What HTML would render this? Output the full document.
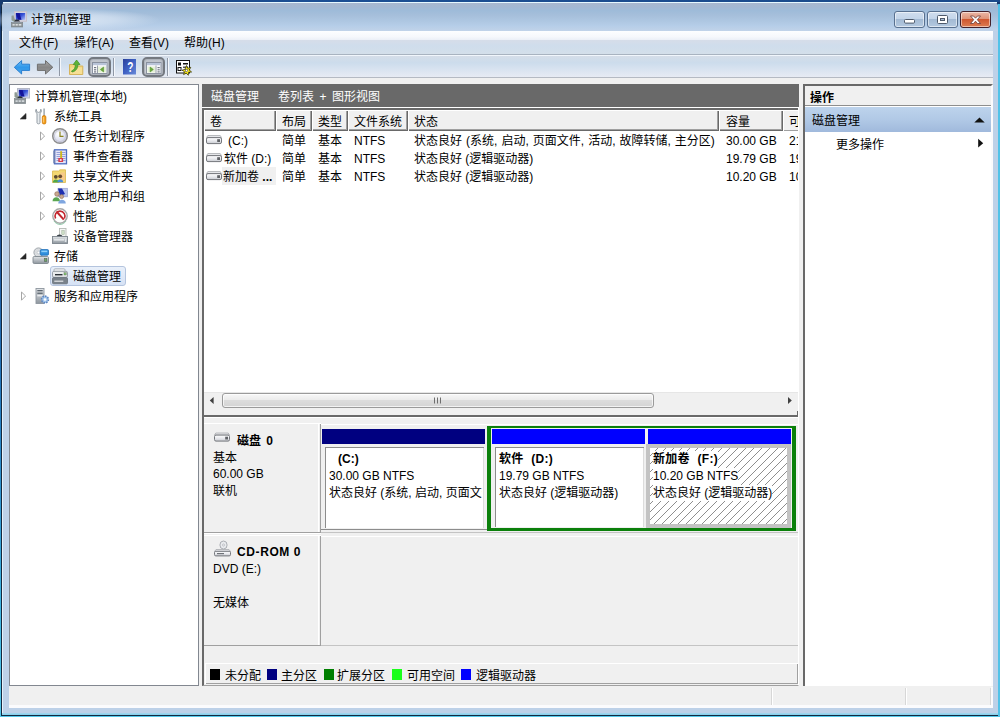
<!DOCTYPE html>
<html lang="zh-CN">
<head>
<meta charset="utf-8">
<title>计算机管理</title>
<style>
html,body{margin:0;padding:0;}
body{width:1000px;height:717px;overflow:hidden;position:relative;background:linear-gradient(to bottom,#173a6e 0%,#1b4f98 30%,#2783c6 60%,#3fb6e2 85%,#55c8ea 100%);
 font-family:"Liberation Sans","Noto Sans CJK SC",sans-serif;font-size:12px;color:#000;line-height:14px;}
.a{position:absolute;}
.t{position:absolute;white-space:nowrap;height:14px;line-height:14px;}
.b{font-weight:bold;}
svg{position:absolute;overflow:visible;}
#frame{left:1px;top:2px;width:997px;height:714px;box-sizing:border-box;background:#bdd1e8;border-left:1px solid #15293f;border-bottom:1px solid #15293f;border-radius:5px 5px 0 0;box-shadow:inset 1px 1px 0 #e6f2fc;}
#titlegrad{left:2px;top:3px;width:996px;height:28px;border-radius:4px 4px 0 0;background:linear-gradient(to bottom,#a9b7cf 0%,#a3b8d3 15%,#9ebbd9 27%,#a6bfdb 45%,#aec7e2 65%,#b5cde8 80%,#c1d3e9 100%);}
#menubar{left:9px;top:31px;width:984px;height:23px;background:linear-gradient(#fdfeff 0%,#f6f8fc 25%,#ecf0f8 38%,#d6dde9 40%,#cfddec 65%,#d4dfea 100%);}
#toolbar{left:9px;top:55px;width:984px;height:22px;background:linear-gradient(#f1f6fc 0,#f1f6fc 1px,#d5dde8 1px,#ccdcec 35%,#e7ebf4 100%);}
#client{left:9px;top:78px;width:984px;height:630px;background:#f0f0f0;}
.hd{position:absolute;top:110px;height:21px;background:#f0f0f0;box-shadow:inset 1px 1px 0 #fff,inset -1px -1px 0 #696969,inset -2px -2px 0 #a0a0a0;}
.raised{position:absolute;background:#f0f0f0;box-shadow:inset 1px 1px 0 #fff,inset -1px -1px 0 #a0a0a0;}
.sunk{position:absolute;background:#fff;box-shadow:inset 1px 1px 0 #a0a0a0,inset -1px -1px 0 #e3e3e3;}
.pbtn{position:absolute;top:57px;width:23px;height:20px;border:2px solid #747980;border-radius:5px;box-sizing:border-box;background:linear-gradient(#bcc1c9,#cdd1d8);box-shadow:inset 0 0 0 1px #aeb3bb;}
.tsep{position:absolute;top:58px;width:1px;height:18px;background:#8f97a5;box-shadow:1px 0 0 #f4f7fb;}
#tglow{left:-20px;top:3px;width:180px;height:28px;background:radial-gradient(ellipse closest-side at 50% 60%,rgba(222,233,245,.9) 0%,rgba(215,228,243,.7) 50%,rgba(200,218,238,0) 100%);}
</style>
</head>
<body>
<div id="frame" class="a"></div>
<div id="titlegrad" class="a"></div>
<div id="tglow" class="a"></div>
<div class="a" style="left:3px;top:2px;width:994px;height:1px;background:#e6f8ff;"></div>
<div class="a" style="left:0;top:0;width:1000px;height:2px;background:linear-gradient(to right,#173a6e,#1d4f94 30%,#1b4a8a 100%);"></div>
<div class="a" style="left:998px;top:4px;width:2px;height:713px;background:#52c2e8;"></div>
<div class="a" style="left:2px;top:713px;width:996px;height:2px;background:linear-gradient(#a9d6ee,#7fd0ec);"></div>
<div class="t" style="left:31px;top:13px;">计算机管理</div>
<div id="menubar" class="a"></div>
<div class="a" style="left:9px;top:54px;width:984px;height:1px;background:#a9b3c0;"></div>
<div id="toolbar" class="a"></div>
<div class="a" style="left:9px;top:77px;width:984px;height:1px;background:#b5bac3;"></div>
<div id="client" class="a"></div>
<div class="t" style="left:19px;top:36px;">文件(F)</div>
<div class="t" style="left:74px;top:36px;">操作(A)</div>
<div class="t" style="left:129px;top:36px;">查看(V)</div>
<div class="t" style="left:184px;top:36px;">帮助(H)</div>
<svg class="a" style="left:9px;top:9px;" width="22" height="20" viewBox="9 9 22 20">
 <defs><linearGradient id="scr0" x1="0" y1="0" x2="1" y2="1"><stop offset="0" stop-color="#0a1aa0"/><stop offset="0.5" stop-color="#3a55d8"/><stop offset="1" stop-color="#b8c4f6"/></linearGradient></defs>
 <g transform="translate(-3 -76.8)">
 <rect x="17.5" y="88.5" width="12" height="9.5" fill="#d5d9e6" stroke="#c9bfc8" stroke-width="1"/>
 <rect x="18.8" y="89.8" width="9.4" height="6.9" fill="url(#scr0)"/>
 <polygon points="19,90 22.5,90 24.5,96.5 21,96.5" fill="#14149a"/>
 <path d="M14.5 92.5 L16.5 92 L17.5 95.5 L21 97.8 L17 98.6 L14.5 97 Z" fill="#8e9a94"/>
 <path d="M17.2 98.2 C18.5 95.6 21.5 95.6 23 98.2 Z" fill="#2a2f3a"/>
 <rect x="14.3" y="99.4" width="11.4" height="4.4" fill="#8b9296" stroke="#7a8286" stroke-width="0.6"/>
 <rect x="15.5" y="100.8" width="2.2" height="1.6" fill="#d9dee0"/><rect x="18.6" y="100.8" width="2.2" height="1.6" fill="#d9dee0"/><rect x="21.7" y="100.8" width="2.6" height="1.6" fill="#d9dee0"/>
 </g>
</svg>
<!-- caption buttons -->
<div class="a" style="left:894px;top:11px;width:31px;height:17px;box-sizing:border-box;border:1px solid #58708f;border-radius:3px;background:linear-gradient(#d0deee 0%,#c3d5e9 45%,#a3bad4 50%,#b4c9e0 100%);box-shadow:inset 0 0 0 1px rgba(255,255,255,.55);"></div>
<div class="a" style="left:927px;top:11px;width:31px;height:17px;box-sizing:border-box;border:1px solid #58708f;border-radius:3px;background:linear-gradient(#d0deee 0%,#c3d5e9 45%,#a3bad4 50%,#b4c9e0 100%);box-shadow:inset 0 0 0 1px rgba(255,255,255,.55);"></div>
<div class="a" style="left:960px;top:11px;width:31px;height:17px;box-sizing:border-box;border:1px solid #43202a;border-radius:3px;background:linear-gradient(#eab7a6 0%,#df9479 45%,#cf5730 50%,#dd7d52 100%);box-shadow:inset 0 0 0 1px rgba(255,255,255,.5);"></div>
<svg class="a" style="left:894px;top:11px;" width="97" height="17" viewBox="0 0 97 17">
 <rect x="10.5" y="8.5" width="10" height="3.6" rx="1" fill="#fff" stroke="#4e5a6b" stroke-width="1"/>
 <rect x="43.5" y="4.5" width="10" height="8" rx="1" fill="#fff" stroke="#4e5a6b" stroke-width="1"/>
 <rect x="46.5" y="7.5" width="4" height="2" fill="#a9bdd6" stroke="#4e5a6b" stroke-width="1"/>
 <path d="M76.5 5 L79.5 5 L81.5 7.2 L83.5 5 L86.5 5 L83.3 8.7 L86.5 12.5 L83.5 12.5 L81.5 10.2 L79.5 12.5 L76.5 12.5 L79.7 8.7 Z" fill="#fff" stroke="#6a3a36" stroke-width="0.8"/>
</svg>
<!-- toolbar -->
<svg class="a" style="left:9px;top:55px;" width="200" height="23" viewBox="9 55 200 23">
 <defs>
  <linearGradient id="gb" x1="0" y1="0" x2="0" y2="1"><stop offset="0" stop-color="#6fc0f7"/><stop offset="0.5" stop-color="#2f97ea"/><stop offset="1" stop-color="#4aa8ee"/></linearGradient>
  <linearGradient id="gg" x1="0" y1="0" x2="0" y2="1"><stop offset="0" stop-color="#a9a9a9"/><stop offset="0.5" stop-color="#868686"/><stop offset="1" stop-color="#9a9a9a"/></linearGradient>
  <linearGradient id="gh" x1="0" y1="0" x2="1" y2="1"><stop offset="0" stop-color="#2a3f9a"/><stop offset="0.5" stop-color="#3f62c4"/><stop offset="1" stop-color="#6a8ad8"/></linearGradient>
 </defs>
 <!-- back -->
 <path d="M14.3 67.3 L21.6 60.6 L21.6 64.2 L29.6 64.2 L29.6 70.4 L21.6 70.4 L21.6 74 Z" fill="url(#gb)" stroke="#2a7fd0" stroke-width="1" stroke-linejoin="round"/>
 <!-- forward -->
 <path d="M52.8 67.3 L45.5 60.6 L45.5 64.2 L37.4 64.2 L37.4 70.4 L45.5 70.4 L45.5 74 Z" fill="url(#gg)" stroke="#6f6f6f" stroke-width="1" stroke-linejoin="round"/>
 <!-- folder up -->
 <path d="M69.5 64.5 L74 64.5 L75.5 66 L82.8 66 L82.8 74.5 L69.5 74.5 Z" fill="#f2d57c" stroke="#d6b45c" stroke-width="1"/>
 <rect x="70.5" y="67.5" width="11.5" height="6.5" fill="#f6df95"/>
 <path d="M71.5 71 C74.5 70 75.5 67 75.3 64.5 L73.2 64.5 L76.6 60 L80 64.5 L77.9 64.5 C78 68.5 75.5 71.5 72 72 Z" fill="#5fb336" stroke="#3f8f22" stroke-width="0.7"/>
 <!-- help -->
 <rect x="123" y="59" width="13" height="15.5" fill="url(#gh)"/>
 <text transform="translate(130.4 72.3) scale(0.72 1.08)" font-family="Liberation Sans, sans-serif" font-weight="bold" font-size="14" fill="#fff" text-anchor="middle">?</text>
 <!-- properties-like icon -->
 <rect x="176.5" y="60.5" width="13" height="12.5" fill="#fff" stroke="#111" stroke-width="1"/>
 <rect x="178" y="62.5" width="3" height="3" fill="#111"/><rect x="183" y="63" width="5" height="1.5" fill="#111"/>
 <rect x="178" y="67.5" width="3" height="3" fill="none" stroke="#111" stroke-width="1"/><rect x="183" y="66.5" width="5" height="1.5" fill="#555"/>
 <path d="M186.5 65.5 L187.7 68.3 L190.8 67.3 L189.3 70 L191.6 72 L188.6 72.3 L188.3 75.3 L186.2 73.2 L183.6 74.6 L184.5 71.7 L182 70.2 L185 69.3 Z" fill="#f4e11a" stroke="#2a2a00" stroke-width="0.7"/>
 <rect x="185.3" y="69.3" width="2.4" height="2.4" fill="#fff" stroke="#333" stroke-width="0.5"/>
</svg>
<div class="tsep" style="left:59px;"></div>
<div class="tsep" style="left:113px;"></div>
<div class="tsep" style="left:167px;"></div>
<div class="pbtn" style="left:88px;"></div>
<div class="pbtn" style="left:142px;"></div>
<svg class="a" style="left:88px;top:57px;" width="80" height="20" viewBox="88 57 80 20">
 <!-- show/hide console tree -->
 <rect x="92.5" y="62.5" width="14.5" height="11" fill="#fafbfd" stroke="#8a92a0" stroke-width="1"/>
 <rect x="93" y="63" width="13.5" height="2.2" fill="#b9c4d8"/>
 <rect x="98" y="66.5" width="8" height="6" fill="#e5f0d8"/>
 <line x1="97.5" y1="65.5" x2="97.5" y2="73" stroke="#9aa0aa" stroke-width="1"/>
 <rect x="94" y="67" width="2.2" height="1.2" fill="#6f7681"/><rect x="94" y="69.2" width="2.2" height="1.2" fill="#6f7681"/><rect x="94" y="71.3" width="2.2" height="1.2" fill="#6f7681"/>
 <path d="M100.3 69.5 L103.6 67 L103.6 72 Z" fill="#6aaa3c" stroke="#4c8a28" stroke-width="0.5"/>
 <!-- show/hide action pane -->
 <rect x="146.5" y="62.5" width="14.5" height="11" fill="#fafbfd" stroke="#8a92a0" stroke-width="1"/>
 <rect x="147" y="63" width="13.5" height="2.2" fill="#b9c4d8"/>
 <rect x="147.5" y="66.5" width="8" height="6" fill="#e5f0d8"/>
 <line x1="156" y1="65.5" x2="156" y2="73" stroke="#9aa0aa" stroke-width="1"/>
 <rect x="157.5" y="67" width="2.2" height="1.2" fill="#6f7681"/><rect x="157.5" y="69.2" width="2.2" height="1.2" fill="#6f7681"/><rect x="157.5" y="71.3" width="2.2" height="1.2" fill="#6f7681"/>
 <path d="M153.4 69.5 L150.1 67 L150.1 72 Z" fill="#6aaa3c" stroke="#4c8a28" stroke-width="0.5"/>
</svg>
<!-- tree panel -->
<div class="a" style="left:9px;top:84px;width:190px;height:602px;box-sizing:border-box;background:#fff;border:1px solid #828790;"></div>
<div class="a" style="left:50px;top:266px;width:76px;height:20px;box-sizing:border-box;border:1px solid #b4c4de;border-radius:3px;background:linear-gradient(#e9f0fa,#d6e2f5);"></div>
<div class="t" style="left:35px;top:90px;">计算机管理(本地)</div>
<div class="t" style="left:54px;top:110px;">系统工具</div>
<div class="t" style="left:73px;top:130px;">任务计划程序</div>
<div class="t" style="left:73px;top:150px;">事件查看器</div>
<div class="t" style="left:73px;top:170px;">共享文件夹</div>
<div class="t" style="left:73px;top:190px;">本地用户和组</div>
<div class="t" style="left:73px;top:210px;">性能</div>
<div class="t" style="left:73px;top:230px;">设备管理器</div>
<div class="t" style="left:54px;top:250px;">存储</div>
<div class="t" style="left:73px;top:270px;">磁盘管理</div>
<div class="t" style="left:54px;top:290px;">服务和应用程序</div>
<svg class="a" style="left:9px;top:84px;" width="120" height="230" viewBox="9 84 120 230">
 <!-- expand glyphs -->
 <path d="M26 113.5 L26 119 L20.3 119 Z" fill="#262626" stroke="#262626" stroke-width="0.6"/>
 <path d="M26 253.5 L26 259 L20.3 259 Z" fill="#262626" stroke="#262626" stroke-width="0.6"/>
 <g fill="#fff" stroke="#a6a6a6" stroke-width="1">
  <path d="M40.5 132 L44.6 136 L40.5 140.2 Z"/>
  <path d="M40.5 152 L44.6 156 L40.5 160.2 Z"/>
  <path d="M40.5 172 L44.6 176 L40.5 180.2 Z"/>
  <path d="M40.5 192 L44.6 196 L40.5 200.2 Z"/>
  <path d="M40.5 212 L44.6 216 L40.5 220.2 Z"/>
  <path d="M21.5 292 L25.6 296 L21.5 300.2 Z"/>
 </g>
</svg>
<svg class="a" style="left:9px;top:84px;" width="120" height="230" viewBox="9 84 120 230">
 <defs>
  <linearGradient id="scr" x1="0" y1="0" x2="1" y2="1"><stop offset="0" stop-color="#0a1aa0"/><stop offset="0.5" stop-color="#3a55d8"/><stop offset="1" stop-color="#b8c4f6"/></linearGradient>
  <radialGradient id="clk" cx="0.4" cy="0.35" r="0.7"><stop offset="0" stop-color="#ffffff"/><stop offset="1" stop-color="#c9cde6"/></radialGradient>
  <linearGradient id="gry" x1="0" y1="0" x2="0" y2="1"><stop offset="0" stop-color="#e2e5e8"/><stop offset="1" stop-color="#8e969e"/></linearGradient>
 </defs>
 <!-- root: computer management -->
 <rect x="17.5" y="88.5" width="12" height="9.5" fill="#d5d9e6" stroke="#b4b8c6" stroke-width="1"/>
 <rect x="18.8" y="89.8" width="9.4" height="6.9" fill="url(#scr)"/>
 <polygon points="19,90 22.5,90 24.5,96.5 21,96.5" fill="#14149a"/>
 <path d="M14.5 92.5 L16.5 92 L17.5 95.5 L21 97.8 L17 98.6 L14.5 97 Z" fill="#8e9a94"/>
 <path d="M17.2 98.2 C18.5 95.6 21.5 95.6 23 98.2 Z" fill="#2a2f3a"/>
 <rect x="14.3" y="98.6" width="11.4" height="5" fill="#8b9296" stroke="#7a8286" stroke-width="0.6"/>
 <rect x="15.5" y="100.3" width="2.2" height="1.6" fill="#d9dee0"/><rect x="18.6" y="100.3" width="2.2" height="1.6" fill="#d9dee0"/><rect x="21.7" y="100.3" width="2.6" height="1.6" fill="#d9dee0"/>
 <!-- system tools: wrench + screwdriver -->
 <path d="M36.2 109.2 C35.2 110.5 35.4 112.6 37 113.4 L37 122.8 C37 124.2 40 124.2 40 122.8 L40 113.4 C41.6 112.6 41.8 110.5 40.8 109.2 L40.3 111.8 L38.5 112.4 L36.8 111.8 Z" fill="#e8ecef" stroke="#8b949c" stroke-width="0.9"/>
 <rect x="43.4" y="108.5" width="1.4" height="7.5" fill="#9aa2a9"/>
 <rect x="42.3" y="115.5" width="3.6" height="8.5" rx="1.6" fill="#f39a12" stroke="#c9760a" stroke-width="0.7"/>
 <rect x="43.2" y="117" width="1" height="5.5" fill="#ffd07a"/>
 <!-- task scheduler: clock -->
 <circle cx="60" cy="136" r="7.3" fill="url(#clk)" stroke="#8d8d8d" stroke-width="1.5"/>
 <circle cx="60" cy="136" r="5.6" fill="none" stroke="#c2c2cf" stroke-width="0.8"/>
 <path d="M60 131.5 L60 136.3 L63.5 136.3" fill="none" stroke="#8a8420" stroke-width="1.2"/>
 <!-- event viewer -->
 <rect x="54.5" y="149.8" width="12" height="14" fill="#e6e6f7" stroke="#4e6dc0" stroke-width="1.3"/>
 <rect x="53.3" y="150.5" width="2" height="12.8" fill="#6c7fb4"/>
 <g stroke="#7f8ed0" stroke-width="0.8"><line x1="56.5" y1="152.5" x2="65.5" y2="152.5"/><line x1="56.5" y1="154.5" x2="65.5" y2="154.5"/><line x1="56.5" y1="156.5" x2="65.5" y2="156.5"/><line x1="56.5" y1="158.5" x2="65.5" y2="158.5"/><line x1="56.5" y1="160.5" x2="65.5" y2="160.5"/></g>
 <rect x="60.2" y="151.2" width="1.9" height="6.8" fill="#cfb81e"/>
 <rect x="58.3" y="158" width="4.8" height="4" fill="#d83a4a"/>
 <rect x="59.8" y="159.2" width="1.8" height="1.6" fill="#fff"/>
 <!-- shared folders -->
 <path d="M52.5 171 L58.5 171 L60 169.8 L65.5 169.8 L65.5 182.5 L52.5 182.5 Z" fill="#f3d772" stroke="#d9b84e" stroke-width="0.8"/>
 <rect x="60.5" y="172.5" width="4.3" height="8" fill="#f7c98a"/>
 <circle cx="55.8" cy="176.8" r="1.9" fill="#5a4a30"/><path d="M52.8 182.6 C52.8 178.6 58.8 178.6 58.8 182.6 Z" fill="#4fa84a"/>
 <circle cx="60.2" cy="176.3" r="1.9" fill="#6a4a30"/><path d="M57.4 182.2 C57.4 178.2 63.2 178.2 63.2 182.2 Z" fill="#4a8ed8"/>
 <!-- local users and groups -->
 <rect x="58" y="188.3" width="9.5" height="8.5" fill="#b9c4ee" stroke="#9aa4cc" stroke-width="0.7"/>
 <path d="M58 188.5 L62 188.5 L65 194 L60 196 Z" fill="#1f2fb0"/>
 <circle cx="57" cy="194" r="2.3" fill="#c9a890" stroke="#8a6a55" stroke-width="0.6"/>
 <path d="M52.5 201.3 C52.5 196 60 196 60 201.3 Z" fill="#5aa652"/>
 <circle cx="61.6" cy="196.6" r="2" fill="#c9a890" stroke="#8a6a55" stroke-width="0.6"/>
 <path d="M58.2 203.4 C58.2 198.6 65.8 198.6 65.8 203.4 Z" fill="#7fa6e0"/>
 <!-- performance -->
 <circle cx="60" cy="216" r="7.2" fill="#fff" stroke="#a7a7a7" stroke-width="1.4"/>
 <path d="M55.6 218.5 A5 5 0 1 1 64.4 218.5" fill="none" stroke="#c2262e" stroke-width="1.6"/>
 <path d="M56.5 211.5 L63.8 219.6" stroke="#c2262e" stroke-width="2"/>
 <path d="M54 221 A7 7 0 0 0 66 221" fill="none" stroke="#8ec8a8" stroke-width="1"/>
 <!-- device manager -->
 <rect x="59.5" y="228.5" width="6.5" height="8" fill="#f5f7f5" stroke="#b5bab5" stroke-width="0.9"/>
 <rect x="61.8" y="230.5" width="2.4" height="4" fill="#cfe0c8" stroke="#9cae9a" stroke-width="0.5"/>
 <path d="M56.5 236.8 C57 233.8 62 233.8 62.5 236.8 Z" fill="#3a4148"/>
 <rect x="52.5" y="236.5" width="15" height="7" fill="url(#gry)" stroke="#7c858d" stroke-width="0.9"/>
 <rect x="54" y="239.2" width="10" height="1.3" fill="#e9edf0"/>
 <rect x="64.8" y="238.5" width="1.6" height="3.5" fill="#dfe4e8"/>
 <!-- storage -->
 <circle cx="38.5" cy="252.5" r="4.6" fill="#d9dcdf" stroke="#9aa0a6" stroke-width="0.9"/>
 <circle cx="38.5" cy="252.5" r="1.3" fill="#fff" stroke="#a8aeb4" stroke-width="0.5"/>
 <rect x="40.3" y="249.6" width="8.2" height="5.6" rx="1" fill="#2f8fdd" stroke="#1f6fb8" stroke-width="0.8"/>
 <rect x="41.3" y="250.6" width="6" height="1.6" fill="#8fd0fa"/>
 <rect x="33" y="256.5" width="15.5" height="7" rx="1.2" fill="url(#gry)" stroke="#7f888f" stroke-width="0.9"/>
 <rect x="44.5" y="258.6" width="2.4" height="2.8" fill="#6fa86a" stroke="#4a5a48" stroke-width="0.5"/>
 <!-- disk management -->
 <rect x="54" y="268.8" width="11" height="3" rx="1" fill="#eef0f2" stroke="#a2a9b0" stroke-width="0.8"/>
 <rect x="52.5" y="271.3" width="15" height="6" rx="1.4" fill="#e9ecee" stroke="#8d959d" stroke-width="0.9"/>
 <rect x="55" y="274" width="7.5" height="1.4" fill="#2c3238"/>
 <rect x="64" y="272.8" width="2.2" height="2.2" fill="#7fc070" stroke="#5a6a58" stroke-width="0.4"/>
 <rect x="52.5" y="277.6" width="15" height="6.2" rx="1" fill="#79828b" stroke="#666f78" stroke-width="0.8"/>
 <rect x="54.3" y="280.6" width="9" height="1.2" fill="#e3e7ea"/>
 <!-- services and applications -->
 <rect x="36" y="288.5" width="8" height="15" fill="url(#gry)" stroke="#8e969e" stroke-width="0.9"/>
 <rect x="37.3" y="290" width="5.4" height="1.3" fill="#5d666f"/><rect x="37.3" y="292.6" width="5.4" height="1.3" fill="#5d666f"/><rect x="37.3" y="295.2" width="5.4" height="1.1" fill="#f4f6f8"/>
 <circle cx="45" cy="299.5" r="3.4" fill="#9fc3ea" stroke="#5f86c0" stroke-width="1.6" stroke-dasharray="1.5 1.1"/>
 <circle cx="45" cy="299.5" r="1.3" fill="#fff"/>
</svg>
<!-- middle pane -->
<div class="a" style="left:202px;top:84px;width:597px;height:23px;background:#696969;"></div>
<div class="t" style="left:211px;top:90px;color:#fff;">磁盘管理</div>
<div class="t" style="left:278px;top:90px;color:#fff;"><span style="word-spacing:2.2px">卷列表 + 图形视图</span></div>
<div class="a" style="left:202px;top:108px;width:597px;height:578px;box-sizing:border-box;border-left:2px solid #696969;border-bottom:1px solid #a0a0a0;border-right:1px solid #fff;background:#f0f0f0;"></div>
<!-- list view -->
<div class="a" style="left:204px;top:109px;width:594px;height:284px;background:#fff;"></div>
<div class="a" style="left:202px;top:107px;width:597px;height:1px;background:#fff;"></div>
<div class="a" style="left:202px;top:108px;width:596px;height:2px;background:#696969;"></div>
<div class="hd" style="left:204px;width:72px;"></div>
<div class="hd" style="left:276px;width:36px;"></div>
<div class="hd" style="left:312px;width:36px;"></div>
<div class="hd" style="left:348px;width:60px;"></div>
<div class="hd" style="left:408px;width:311px;"></div>
<div class="hd" style="left:719px;width:64px;"></div>
<div class="hd" style="left:783px;width:15px;box-shadow:inset 1px 1px 0 #fff,inset 0 -1px 0 #a0a0a0;"></div>
<div class="t" style="left:210px;top:115px;">卷</div>
<div class="t" style="left:282px;top:115px;">布局</div>
<div class="t" style="left:318px;top:115px;">类型</div>
<div class="t" style="left:354px;top:115px;">文件系统</div>
<div class="t" style="left:414px;top:115px;">状态</div>
<div class="t" style="left:726px;top:115px;">容量</div>
<div class="t" style="left:789px;top:115px;width:9px;overflow:hidden;">可用</div>
<div class="a" style="left:222px;top:167px;width:54px;height:18px;background:#f0f0f0;"></div>
<!-- rows -->
<div class="t" style="left:228px;top:134px;">(C:)</div>
<div class="t" style="left:224px;top:152px;">软件 (D:)</div>
<div class="t" style="left:223px;top:170px;">新加卷 <b>...</b></div>
<div class="t" style="left:282px;top:134px;">简单</div><div class="t" style="left:318px;top:134px;">基本</div><div class="t" style="left:354px;top:134px;">NTFS</div>
<div class="t" style="left:282px;top:152px;">简单</div><div class="t" style="left:318px;top:152px;">基本</div><div class="t" style="left:354px;top:152px;">NTFS</div>
<div class="t" style="left:282px;top:170px;">简单</div><div class="t" style="left:318px;top:170px;">基本</div><div class="t" style="left:354px;top:170px;">NTFS</div>
<div class="t" style="left:414px;top:134px;"><span style="word-spacing:0.7px">状态良好 (系统, 启动, 页面文件, 活动, 故障转储, 主分区)</span></div>
<div class="t" style="left:414px;top:152px;">状态良好 (逻辑驱动器)</div>
<div class="t" style="left:414px;top:170px;">状态良好 (逻辑驱动器)</div>
<div class="t" style="left:726px;top:134px;">30.00 GB</div>
<div class="t" style="left:726px;top:152px;">19.79 GB</div>
<div class="t" style="left:726px;top:170px;">10.20 GB</div>
<div class="t" style="left:789px;top:134px;width:9px;overflow:hidden;">21.</div>
<div class="t" style="left:789px;top:152px;width:9px;overflow:hidden;">19.</div>
<div class="t" style="left:789px;top:170px;width:9px;overflow:hidden;">10.</div>
<!-- h scrollbar -->
<div class="a" style="left:204px;top:392px;width:594px;height:17px;background:#f0f0f0;border-top:1px solid #e6e6e6;box-sizing:border-box;"></div>
<div class="a" style="left:222px;top:393px;width:432px;height:15px;box-sizing:border-box;border:1px solid #9a9a9a;border-radius:3px;background:linear-gradient(#f7f7f7 0%,#ebebeb 45%,#dcdcdc 50%,#d4d4d4 100%);box-shadow:inset 0 0 0 1px rgba(255,255,255,.7);"></div>
<svg class="a" style="left:204px;top:392px;" width="594" height="17" viewBox="204 392 594 17">
 <path d="M209.8 400.5 L213.6 397 L213.6 404 Z" fill="#404040"/>
 <path d="M791.8 400.5 L788 397 L788 404 Z" fill="#404040"/>
 <g stroke="#6e6e6e" stroke-width="1"><line x1="434.5" y1="397.5" x2="434.5" y2="403.5"/><line x1="437.5" y1="397.5" x2="437.5" y2="403.5"/><line x1="440.5" y1="397.5" x2="440.5" y2="403.5"/></g>
</svg>
<!-- splitter -->
<div class="a" style="left:204px;top:415px;width:594px;height:2px;background:#696969;"></div>
<div class="a" style="left:797px;top:411px;width:1px;height:5px;background:#696969;"></div>
<div class="a" style="left:204px;top:417px;width:594px;height:1px;background:#fff;"></div>
<!-- graphical view -->
<!-- disk 0 label block -->
<div class="a" style="left:204px;top:423px;width:117px;height:110px;background:#f0f0f0;box-shadow:inset 0 1px 0 #fff,inset -1px -1px 0 #a0a0a0, 0 1px 0 #fff;"></div>
<div class="a" style="left:318px;top:424px;width:1px;height:108px;background:#fff;"></div>
<div class="a" style="left:321px;top:532px;width:477px;height:1px;background:#c4c4c4;"></div>
<div class="a" style="left:321px;top:424px;width:477px;height:1px;background:#fff;"></div>
<div class="t b" style="left:237px;top:434px;word-spacing:2px;">磁盘 0</div>
<div class="t" style="left:213px;top:451px;">基本</div>
<div class="t" style="left:213px;top:467px;">60.00 GB</div>
<div class="t" style="left:213px;top:484px;">联机</div>
<!-- C: -->
<div class="a" style="left:322px;top:429px;width:163px;height:15px;background:#000080;"></div>
<div class="a" style="left:325px;top:447px;width:159px;height:81px;background:#fff;box-shadow:inset 1px 1px 0 #8c8c8c,inset -1px 0 0 #dcdcdc;"></div>
<div class="a" style="left:321px;top:529px;width:166px;height:1px;background:#8c8c8c;"></div>
<div class="t b" style="left:338px;top:452px;">(C:)</div>
<div class="t" style="left:329px;top:469px;">30.00 GB NTFS</div>
<div class="t" style="left:329px;top:486px;width:153px;overflow:hidden;">状态良好 (系统, 启动, 页面文件, 活动</div>
<!-- extended -->
<div class="a" style="left:487px;top:426px;width:309px;height:105px;box-sizing:border-box;border:4px solid #0b800b;border-top-width:2px;border-bottom-width:3px;background:#f0f0f0;"></div>
<!-- D: -->
<div class="a" style="left:492px;top:429px;width:153px;height:15px;background:#0000ff;"></div>
<div class="a" style="left:495px;top:447px;width:149px;height:80px;background:#fff;box-shadow:inset 1px 1px 0 #8c8c8c,inset -1px 0 0 #dcdcdc;"></div>
<div class="t b" style="left:499px;top:452px;word-spacing:4px;letter-spacing:0.3px;">软件 (D:)</div>
<div class="t" style="left:499px;top:469px;">19.79 GB NTFS</div>
<div class="t" style="left:499px;top:486px;">状态良好 (逻辑驱动器)</div>
<!-- F: -->
<div class="a" style="left:648px;top:429px;width:143px;height:15px;background:#0000ff;"></div>
<div class="a" style="left:646px;top:444px;width:145px;height:84px;box-sizing:border-box;border:4px solid #c3c3c3;background-color:#fff;background-image:repeating-linear-gradient(135deg,#fff 0,#fff 4.96px,#8e8e8e 4.96px,#8e8e8e 5.657px);"></div>
<div class="t b" style="left:653px;top:451px;height:17px;line-height:16px;background:#fff;word-spacing:4px;letter-spacing:0.3px;">新加卷 (F:)</div>
<div class="t" style="left:653px;top:468px;height:17px;line-height:16px;background:#fff;">10.20 GB NTFS</div>
<div class="t" style="left:653px;top:485px;height:16px;line-height:16px;background:#fff;">状态良好 (逻辑驱动器)</div>
<!-- CD-ROM block -->
<div class="a" style="left:204px;top:535px;width:117px;height:111px;background:#f0f0f0;box-shadow:inset 0 1px 0 #fff,inset -1px -1px 0 #a0a0a0;"></div>
<div class="a" style="left:318px;top:536px;width:1px;height:109px;background:#fff;"></div>
<div class="a" style="left:321px;top:645px;width:477px;height:1px;background:#c4c4c4;"></div>
<div class="a" style="left:321px;top:536px;width:477px;height:1px;background:#fff;"></div>
<div class="t b" style="left:237px;top:545px;letter-spacing:0.6px;">CD-ROM 0</div>
<div class="t" style="left:213px;top:562px;">DVD (E:)</div>
<div class="t" style="left:213px;top:596px;">无媒体</div>
<!-- legend -->
<div class="raised" style="left:205px;top:663px;width:593px;height:21px;"></div>
<div class="a" style="left:210px;top:669px;width:10px;height:11px;background:#000;"></div>
<div class="a" style="left:267px;top:669px;width:10px;height:11px;background:#000080;"></div>
<div class="a" style="left:324px;top:669px;width:10px;height:11px;background:#008000;"></div>
<div class="a" style="left:392px;top:669px;width:10px;height:11px;background:#1aff1a;"></div>
<div class="a" style="left:461px;top:669px;width:10px;height:11px;background:#0000ff;"></div>
<div class="t" style="left:225px;top:669px;">未分配</div>
<div class="t" style="left:281px;top:669px;">主分区</div>
<div class="t" style="left:337px;top:669px;">扩展分区</div>
<div class="t" style="left:407px;top:669px;">可用空间</div>
<div class="t" style="left:476px;top:669px;">逻辑驱动器</div>
<!-- disk icons -->
<svg class="a" style="left:204px;top:130px;" width="40" height="440" viewBox="204 130 40 440">
 <defs><linearGradient id="dk" x1="0" y1="0" x2="0" y2="1"><stop offset="0" stop-color="#ffffff"/><stop offset="0.5" stop-color="#e9eaee"/><stop offset="1" stop-color="#c9cbd1"/></linearGradient></defs>
 <path d="M207.8 135.5 L220.2 135.5 L221.5 137.6 L206.5 137.6 Z" fill="#e6e7ea" stroke="#a9acb0" stroke-width="0.8"/><rect x="206.5" y="137.6" width="15" height="6" rx="1.5" fill="url(#dk)" stroke="#74777c" stroke-width="1"/><rect x="217.2" y="139.2" width="2.8" height="2.8" fill="#5f6266"/>
 <path d="M207.8 153.5 L220.2 153.5 L221.5 155.6 L206.5 155.6 Z" fill="#e6e7ea" stroke="#a9acb0" stroke-width="0.8"/><rect x="206.5" y="155.6" width="15" height="6" rx="1.5" fill="url(#dk)" stroke="#74777c" stroke-width="1"/><rect x="217.2" y="157.2" width="2.8" height="2.8" fill="#5f6266"/>
 <path d="M207.8 171.5 L220.2 171.5 L221.5 173.6 L206.5 173.6 Z" fill="#e6e7ea" stroke="#a9acb0" stroke-width="0.8"/><rect x="206.5" y="173.6" width="15" height="6" rx="1.5" fill="url(#dk)" stroke="#74777c" stroke-width="1"/><rect x="217.2" y="175.2" width="2.8" height="2.8" fill="#5f6266"/>
 <path d="M215.8 433.0 L228.2 433.0 L229.5 435.1 L214.5 435.1 Z" fill="#e6e7ea" stroke="#a9acb0" stroke-width="0.8"/><rect x="214.5" y="435.1" width="15" height="6" rx="1.5" fill="url(#dk)" stroke="#74777c" stroke-width="1"/><rect x="225.2" y="436.7" width="2.8" height="2.8" fill="#5f6266"/>
 <ellipse cx="223.5" cy="545" rx="3.6" ry="4" fill="#e9ebee" stroke="#9a9ea4" stroke-width="0.8"/>
 <circle cx="223.5" cy="545" r="1" fill="#fff" stroke="#8d9197" stroke-width="0.5"/>
 <path d="M216 549.5 L229 549.5 L230.5 551.5 L214.5 551.5 Z" fill="#e6e7ea" stroke="#a9acb0" stroke-width="0.8"/>
 <rect x="214.5" y="551.3" width="16" height="4.6" rx="1.3" fill="url(#dk)" stroke="#74777c" stroke-width="1"/>
 <rect x="217" y="553" width="7" height="1.2" fill="#6f7378"/>
</svg>
<!-- actions pane -->
<div class="a" style="left:803px;top:84px;width:190px;height:603px;box-sizing:border-box;background:#fff;border-top:2px solid #696969;border-left:2px solid #696969;border-right:2px solid #fbfbfd;border-bottom:1px solid #8a8a8a;"></div>
<div class="a" style="left:805px;top:86px;width:186px;height:20px;background:#f0f0f0;border-bottom:1px solid #8e8e8e;box-sizing:border-box;"></div>
<div class="t b" style="left:810px;top:91px;">操作</div>
<div class="a" style="left:805px;top:107px;width:186px;height:25px;background:linear-gradient(#bdd3ec 0%,#b1c9e6 50%,#a0b9dc 100%);"></div>
<div class="t" style="left:812px;top:114px;">磁盘管理</div>
<div class="t" style="left:836px;top:138px;">更多操作</div>
<svg class="a" style="left:970px;top:110px;" width="20" height="40" viewBox="970 110 20 40">
 <path d="M974.3 122.6 L979.5 117.4 L984.7 122.6 Z" fill="#111"/>
 <path d="M978.2 138.8 L983.2 143.2 L978.2 147.6 Z" fill="#111"/>
</svg>
<!-- status bar -->
<div class="a" style="left:9px;top:686px;width:984px;height:22px;background:#f0f0f0;"></div>
<div class="a" style="left:771px;top:688px;width:1px;height:19px;background:#d7d7d7;box-shadow:1px 0 0 #fff;"></div>
<div class="a" style="left:905px;top:688px;width:1px;height:19px;background:#d7d7d7;box-shadow:1px 0 0 #fff;"></div>
<div class="a" style="left:990px;top:688px;width:1px;height:19px;background:#d7d7d7;box-shadow:1px 0 0 #fff;"></div>
<div class="a" style="left:9px;top:705px;width:984px;height:3px;background:#fbfbfd;"></div>
<div class="a" style="left:991px;top:687px;width:2px;height:21px;background:#fbfbfd;"></div>
</body>
</html>
